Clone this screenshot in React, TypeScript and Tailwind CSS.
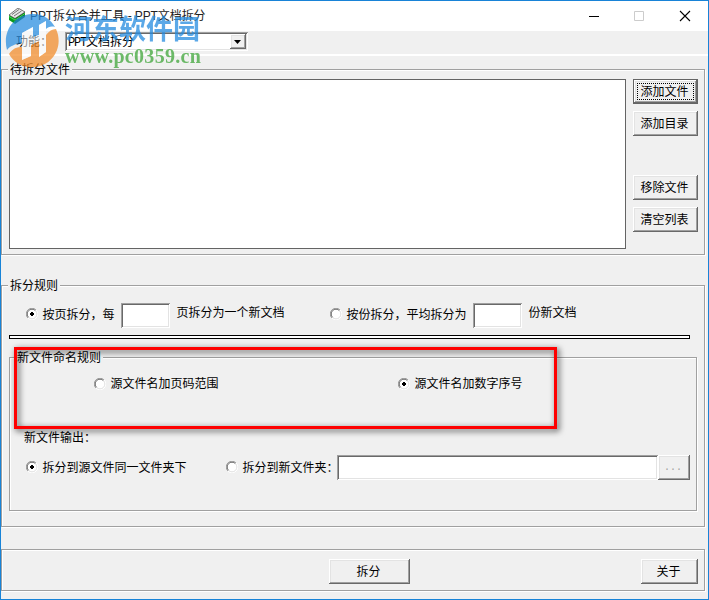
import React from 'react'

type ButtonProps = {
  children: React.ReactNode
  className?: string
}

type RadioProps = {
  checked?: boolean
  children: React.ReactNode
  className?: string
}

type GroupProps = {
  title?: string
  titleClass?: string
  className?: string
  children?: React.ReactNode
}

const etched = 'border border-[#a0a0a0] shadow-[1px_1px_0_#fff,inset_1px_1px_0_#fff]'

function PushButton({ children, className = '' }: ButtonProps) {
  return (
    <button
      className={`flex h-[25px] shrink-0 items-center justify-center bg-[#f0f0f0] pr-[2px] whitespace-nowrap shadow-[inset_-1px_-1px_0_#696969,inset_1px_1px_0_#fff,inset_-2px_-2px_0_#a0a0a0,inset_2px_2px_0_#e3e3e3] ${className}`}
    >
      {children}
    </button>
  )
}

function FocusedButton({ children }: ButtonProps) {
  return (
    <button className="flex h-[25px] w-[65px] shrink-0 border border-[#646464] bg-[#f0f0f0] p-[3px] shadow-[inset_-1px_-1px_0_#696969,inset_1px_1px_0_#fff,inset_-2px_-2px_0_#a0a0a0,inset_2px_2px_0_#e3e3e3]">
      <span className="flex h-full w-full items-center justify-center border border-dotted border-black pr-[2px] whitespace-nowrap">
        {children}
      </span>
    </button>
  )
}

function Radio({ checked, children, className = '' }: RadioProps) {
  return (
    <label className={`-mt-[2px] flex h-4 shrink-0 items-center gap-[4.500px] whitespace-nowrap ${className}`}>
      <svg width="12" height="12" viewBox="0 0 12 12" fill="none" className="-mt-px shrink-0">
        <circle cx="6" cy="6" r="5" fill="#fff" />
        <path d="M1.9 10.1A5.5 5.5 0 0 1 10.1 1.9" stroke="#a0a0a0" />
        <path d="M2.6 9.4A4.6 4.6 0 0 1 9.4 2.6" stroke="#696969" />
        <path d="M10.1 1.9A5.5 5.5 0 0 1 1.9 10.1" stroke="#fff" />
        <path d="M9.4 2.6A4.6 4.6 0 0 1 2.6 9.4" stroke="#e3e3e3" />
        {checked && <path d="M5 4h2v1h1v2h-1v1h-2v-1h-1v-2h1z" fill="#000" />}
      </svg>
      <span>{children}</span>
    </label>
  )
}

function Edit({ className = '' }: { className?: string }) {
  return (
    <input
      className={`shrink-0 bg-white shadow-[inset_1px_1px_0_#a0a0a0,inset_-1px_-1px_0_#fff,inset_2px_2px_0_#696969,inset_-2px_-2px_0_#e3e3e3] outline-none ${className}`}
    />
  )
}

function Group({ title, titleClass = '', className = '', children }: GroupProps) {
  return (
    <section className={`shrink-0 ${etched} ${className}`}>
      {title && (
        <h2 className={`-mt-[9px] h-[18px] w-fit bg-[#f0f0f0] px-[2px] leading-[19px] ${titleClass}`}>{title}</h2>
      )}
      {children}
    </section>
  )
}

function AppIcon() {
  return (
    <svg width="16" height="16" viewBox="0 0 16 16">
      <path d="M0 7L6 10V16L0 12Z" fill="#0a9a1e" />
      <path d="M6 10L16 4V9L6 16Z" fill="#05701a" />
      <path d="M0 7L9 0L16 4L6 10.500Z" fill="#e8e8e8" stroke="#444" strokeWidth=".7" />
      <path d="M3 6.500L10 1.500M5 8L12.500 3" stroke="#666" strokeWidth=".9" />
      <path d="M0 8.500L6 12L16 5.500" stroke="#3ee04c" fill="none" />
    </svg>
  )
}

function TitleBar() {
  return (
    <header className="flex h-[30px] shrink-0 items-center bg-white pl-2">
      <AppIcon />
      <h1 className="ml-[5px] grow text-[12px] tracking-[-0.1px] whitespace-pre text-[#222]">PPT拆分合并工具 - PPT文档拆分</h1>
      <svg width="105" height="12" viewBox="0 0 105 12" fill="none" className="mr-4">
        <path d="M2 6.500h10" stroke="#000" />
        <path d="M47.500 1.500h9v9h-9z" stroke="#ccc" />
        <path d="M93 1l10 10M103 1L93 11" stroke="#000" strokeWidth="1.100" />
      </svg>
    </header>
  )
}

function Watermark() {
  return (
    <div className="pointer-events-none absolute top-[12px] left-[4px] flex">
      <svg width="56" height="56" viewBox="0 0 56 56">
        <g opacity=".72">
          <path d="M2 37C-3 18 9 2 27 1C37 0 46 6 50 14C46 13 43 14 41 16V8L34 12V22L28 24V14L17 20V30C10 31 5 33 2 37Z" fill="#258ce0" />
          <path d="M4 41C8 35 12 34 17 34V47L26 43V32L34 28V44L41 39V22C44 18 47 16 51 16C59 33 48 53 29 54C18 55 9 50 4 41Z" fill="#f28a26" />
        </g>
        <path d="M17 20L28 14V24L34 22V12L41 8V39L34 44V28L26 32V43L17 47Z" fill="#fff" opacity=".55" />
      </svg>
      <div className="mt-px ml-1 flex flex-col whitespace-nowrap opacity-75">
        <span className="text-[27px] leading-[32px] font-bold text-[#258ce0]">河东软件园</span>
        <span className="-mt-px font-['Liberation_Serif',serif] text-[20px] leading-[22px] font-bold tracking-[0.300px] text-[#3fa63a]">
          www.pc0359.cn
        </span>
      </div>
    </div>
  )
}

export default function App() {
  return (
    <main className="relative flex h-[600px] w-[709px] flex-col overflow-hidden border border-[#1883d7] bg-[#f0f0f0] font-['Liberation_Sans','Noto_Sans_CJK_SC',sans-serif] text-[12px] leading-4 text-black">
      <TitleBar />
      <div className="flex h-[25px] shrink-0 items-start border-b-2 border-white pt-px">
        <span className="ml-[15px] w-[49px] pt-[2px]">功能：</span>
        <div className="flex h-[19px] w-[183px] bg-white p-[2px] pl-[3px] shadow-[inset_1px_1px_0_#a0a0a0,inset_-1px_-1px_0_#fff,inset_2px_2px_0_#696969,inset_-2px_-2px_0_#e3e3e3]">
          <span className="grow">
            <span className="font-['Liberation_Mono',monospace] tracking-[-1.200px]">PPT</span>文档拆分
          </span>
          <PushButton className="h-[15px]! w-4">
            <svg width="7" height="4" viewBox="0 0 7 4" className="shrink-0">
              <path d="M0 0h7L3.500 4z" />
            </svg>
          </PushButton>
        </div>
      </div>

      <Group title="待拆分文件" titleClass="ml-[6px]" className="mt-[13px] h-[186px] w-[704px]">
        <div className="ml-[7px] flex">
          <div className="h-[170px] w-[617px] border border-[#646464] bg-white" />
          <div className="ml-[7px] flex flex-col">
            <FocusedButton>添加文件</FocusedButton>
            <PushButton className="mt-[7px] w-[65px]">添加目录</PushButton>
            <PushButton className="mt-[39px] w-[65px]">移除文件</PushButton>
            <PushButton className="mt-[7px] w-[65px]">清空列表</PushButton>
          </div>
        </div>
      </Group>

      <Group title="拆分规则" titleClass="ml-[6px]" className="mt-[30px] h-[242px] w-[704px]">
        <div className="mt-[8px] flex h-[25px] items-center pl-[24px]">
          <Radio checked className="w-[95px]">按页拆分，每</Radio>
          <Edit className="h-[25px] w-[49px]" />
          <span className="-mt-[5px] ml-[6.500px] w-[153.500px]">页拆分为一个新文档</span>
          <Radio className="w-[143px]">按份拆分，平均拆分为</Radio>
          <Edit className="h-[25px] w-[49px]" />
          <span className="-mt-[5px] ml-[6.500px]">份新文档</span>
        </div>
        <div className="mt-[7px] ml-[7px] h-1 w-[681px] border border-black bg-white" />
        <Group title="新文件命名规则" titleClass="ml-[5px]" className="mt-[18px] ml-[7px] h-[154px] w-[688px]">
          <div className="mt-[11px] flex pl-[84px]">
            <Radio className="w-[304px]">源文件名加页码范围</Radio>
            <Radio checked>源文件名加数字序号</Radio>
          </div>
          <p className="mt-[38px] ml-[14px]">新文件输出：</p>
          <div className="mt-[9px] flex items-center pl-[16px]">
            <Radio checked className="mt-0! w-[200px]">拆分到源文件同一文件夹下</Radio>
            <Radio className="mt-0! w-[111px]">拆分到新文件夹：</Radio>
            <Edit className="h-[25px] w-[321px]" />
            <PushButton className="w-8 font-['Liberation_Mono',monospace] text-[10px] text-[#a0a0a0]">...</PushButton>
          </div>
        </Group>
      </Group>

      <Group className="mt-[22px] flex h-[42px] w-[704px] items-start pt-[9px] pl-[327px]">
        <PushButton className="w-[81px]">拆分</PushButton>
        <PushButton className="ml-[231px] w-[57px]">关于</PushButton>
      </Group>

      <div className="pointer-events-none absolute top-[346px] left-[13px] h-[82px] w-[543px] border-[3px] border-[#fe0000] drop-shadow-[2px_2px_3px_rgba(0,0,0,0.75)]" />
      <Watermark />
    </main>
  )
}
